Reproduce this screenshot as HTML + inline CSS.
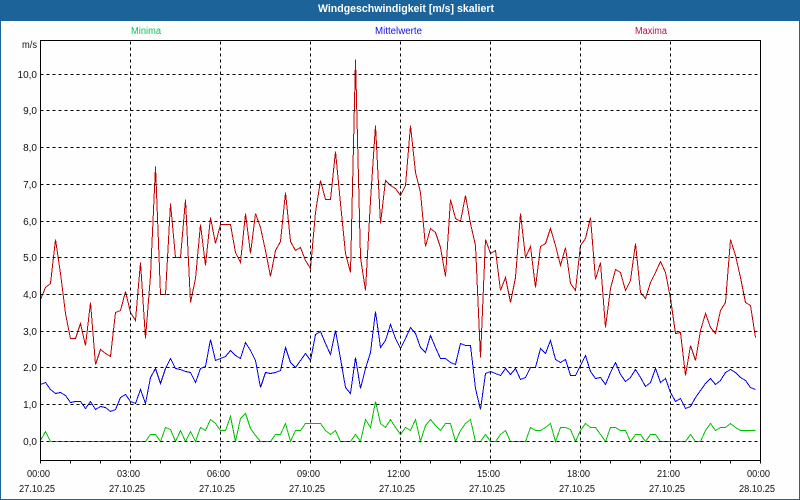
<!DOCTYPE html>
<html lang="de">
<head>
<meta charset="utf-8">
<title>Windgeschwindigkeit</title>
<style>
html,body{margin:0;padding:0;width:800px;height:500px;overflow:hidden;background:#fff}
svg{display:block;position:absolute;left:0;top:0}
text{font-family:"Liberation Sans",sans-serif;font-size:10px;fill:#111}
.r{text-anchor:end}
</style>
</head>
<body>
<svg width="800" height="500" viewBox="0 0 800 500" xmlns="http://www.w3.org/2000/svg">
<rect x="0" y="0" width="800" height="500" fill="#1b6399"/>
<rect x="1" y="21" width="798" height="478" fill="#fefefe"/>
<text x="318" y="12" textLength="176" lengthAdjust="spacingAndGlyphs" style="font-weight:bold;fill:#fff;font-size:11px">Windgeschwindigkeit [m/s] skaliert</text>
<text x="131" y="34" textLength="30" lengthAdjust="spacingAndGlyphs" style="fill:#00c850">Minima</text>
<text x="375" y="34" textLength="47" lengthAdjust="spacingAndGlyphs" style="fill:#1010f0">Mittelwerte</text>
<text x="635" y="34" textLength="32" lengthAdjust="spacingAndGlyphs" style="fill:#b01050">Maxima</text>
<text x="22" y="48" textLength="15" lengthAdjust="spacingAndGlyphs">m/s</text>

<g>
<text x="37" y="78" class="r">10,0</text>
<text x="37" y="114" class="r">9,0</text>
<text x="37" y="151" class="r">8,0</text>
<text x="37" y="188" class="r">7,0</text>
<text x="37" y="225" class="r">6,0</text>
<text x="37" y="261" class="r">5,0</text>
<text x="37" y="298" class="r">4,0</text>
<text x="37" y="335" class="r">3,0</text>
<text x="37" y="371" class="r">2,0</text>
<text x="37" y="408" class="r">1,0</text>
<text x="37" y="445" class="r">0,0</text>
</g>

<g>
<text x="27" y="477" textLength="23" lengthAdjust="spacingAndGlyphs">00:00</text>
<text x="117" y="477" textLength="23" lengthAdjust="spacingAndGlyphs">03:00</text>
<text x="207" y="477" textLength="23" lengthAdjust="spacingAndGlyphs">06:00</text>
<text x="297" y="477" textLength="23" lengthAdjust="spacingAndGlyphs">09:00</text>
<text x="387" y="477" textLength="23" lengthAdjust="spacingAndGlyphs">12:00</text>
<text x="477" y="477" textLength="23" lengthAdjust="spacingAndGlyphs">15:00</text>
<text x="567" y="477" textLength="23" lengthAdjust="spacingAndGlyphs">18:00</text>
<text x="657" y="477" textLength="23" lengthAdjust="spacingAndGlyphs">21:00</text>
<text x="747" y="477" textLength="23" lengthAdjust="spacingAndGlyphs">00:00</text>
<text x="19" y="492" textLength="36" lengthAdjust="spacingAndGlyphs">27.10.25</text>
<text x="109" y="492" textLength="36" lengthAdjust="spacingAndGlyphs">27.10.25</text>
<text x="199" y="492" textLength="36" lengthAdjust="spacingAndGlyphs">27.10.25</text>
<text x="289" y="492" textLength="36" lengthAdjust="spacingAndGlyphs">27.10.25</text>
<text x="379" y="492" textLength="36" lengthAdjust="spacingAndGlyphs">27.10.25</text>
<text x="469" y="492" textLength="36" lengthAdjust="spacingAndGlyphs">27.10.25</text>
<text x="559" y="492" textLength="36" lengthAdjust="spacingAndGlyphs">27.10.25</text>
<text x="649" y="492" textLength="36" lengthAdjust="spacingAndGlyphs">27.10.25</text>
<text x="739" y="492" textLength="36" lengthAdjust="spacingAndGlyphs">28.10.25</text>
</g>

<g transform="translate(.5,.5)" shape-rendering="crispEdges" fill="none">
<polyline stroke="#00c000" points="40,440 45,431 50,441 55,441 60,441 65,441 70,441 75,441 80,441 85,441 90,441 95,441 100,441 105,441 110,441 115,441 120,441 125,441 130,441 135,441 140,441 145,441 150,434 155,434 160,441 165,427 170,429 175,441 180,430 185,441 190,431 195,441 200,427 205,430 210,419 215,423 220,430 225,430 230,416 235,441 240,418 245,413 250,428 255,435 260,441 265,441 270,441 275,434 280,434 285,423 290,441 295,430 300,430 305,423 310,423 315,423 320,423 325,430 330,434 335,430 340,441 345,441 350,441 355,434 360,441 365,419 370,427 375,401 380,423 385,427 390,419 395,427 400,434 405,427 410,430 415,419 420,441 425,425 430,419 435,425 440,430 445,423 450,423 455,441 460,430 465,423 470,419 475,441 480,441 485,434 490,441 495,441 500,434 505,430 510,441 515,441 520,441 525,441 530,427 535,430 540,430 545,427 550,423 555,441 560,427 565,427 570,429 575,441 580,430 585,423 590,427 595,427 600,434 605,441 610,427 615,427 620,430 625,430 630,441 635,434 640,434 645,441 650,434 655,434 660,441 665,441 670,441 675,441 680,441 685,441 690,434 695,441 700,441 705,430 710,423 715,430 720,427 725,427 730,423 735,427 740,430 745,430 750,430 755,430"/>

<polyline stroke="#0000e6" points="40,384 45,382 50,389 55,393 60,392 65,395 70,402 75,401 80,401 85,408 90,401 95,409 100,406 105,407 110,411 115,409 120,397 125,394 130,401 135,403 140,389 145,403 150,377 155,368 160,383 165,368 170,358 175,368 180,369 185,371 190,372 195,382 200,368 205,366 210,339 215,360 220,358 225,356 230,350 235,355 240,358 245,342 250,350 255,360 260,387 265,372 270,373 275,372 280,370 285,347 290,362 295,367 300,360 305,353 310,360 315,334 320,331 325,343 330,354 335,330 340,358 345,387 350,393 355,357 360,388 365,368 370,352 375,311 380,347 385,340 390,324 395,338 400,348 405,338 410,327 415,333 420,347 425,352 430,335 435,347 440,358 445,358 450,362 455,364 460,343 465,345 470,345 475,388 480,409 485,373 490,371 495,373 500,375 505,368 510,374 515,368 520,379 525,377 530,367 535,367 540,348 545,353 550,340 555,359 560,362 565,359 570,375 575,375 580,365 585,355 590,371 595,378 600,377 605,384 610,372 615,362 620,374 625,381 630,377 635,369 640,377 645,386 650,382 655,368 660,382 665,378 670,392 675,401 680,398 685,408 690,406 695,397 700,390 705,383 710,378 715,384 720,380 725,372 730,369 735,372 740,377 745,380 750,387 755,389"/>

<polyline stroke="#c00000" points="40,299 45,287 50,283 55,239 60,273 65,313 70,338 75,338 80,323 85,345 90,302 95,364 100,349 105,353 110,356 115,312 120,310 125,291 130,312 135,320 140,262 145,338 150,275 155,166 160,294 165,294 170,203 175,257 180,257 185,199 190,302 195,278 200,224 205,265 210,217 215,243 220,224 225,224 230,224 235,252 240,262 245,213 250,253 255,213 260,227 265,250 270,276 275,250 280,241 285,192 290,241 295,250 300,247 305,260 310,268 315,212 320,180 325,199 330,199 335,151 340,203 345,253 350,272 355,59 360,257 365,290 370,200 375,125 380,223 385,180 390,185 395,188 400,195 405,185 410,125 415,172 420,192 425,246 430,228 435,232 440,247 445,276 450,199 455,218 460,221 465,195 470,223 475,245 480,357 485,239 490,253 495,250 500,290 505,277 510,302 515,277 520,213 525,257 530,246 535,287 540,246 545,243 550,228 555,245 560,265 565,247 570,283 575,290 580,245 585,238 590,217 595,279 600,262 605,327 610,288 615,269 620,272 625,290 630,280 635,243 640,292 645,298 650,282 655,272 660,261 665,272 670,298 675,333 680,332 685,375 690,345 695,360 700,330 705,313 710,327 715,333 720,310 725,302 730,239 735,255 740,277 745,302 750,305 755,337"/>

<g stroke="#000" stroke-dasharray="3 3">
<path d="M40 74H758M40 110H758M40 147H758M40 184H758M40 221H758M40 257H758M40 294H758M40 331H758M40 367H758M40 404H758M40 441H758"/>
<path d="M130 41V460M220 41V460M310 41V460M400 41V460M490 41V460M580 41V460M670 41V460"/>
</g>
<path stroke="#000" d="M40 40H760V460H40ZM40 460V463M70 460V463M100 460V463M130 460V463M160 460V463M190 460V463M220 460V463M250 460V463M280 460V463M310 460V463M340 460V463M370 460V463M400 460V463M430 460V463M460 460V463M490 460V463M520 460V463M550 460V463M580 460V463M610 460V463M640 460V463M670 460V463M700 460V463M730 460V463M760 460V463"/>
</g>
</svg>
</body>
</html>
